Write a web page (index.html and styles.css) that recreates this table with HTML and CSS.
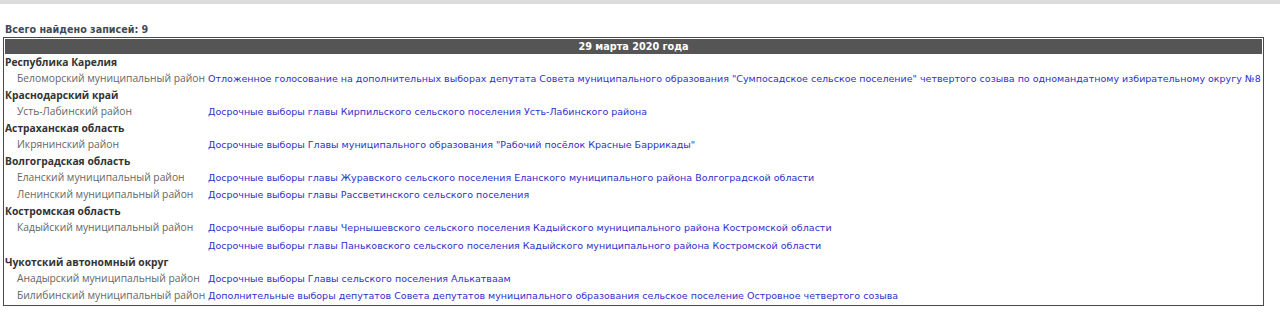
FILE: index.html
```html
<!DOCTYPE html>
<html lang="ru">
<head>
<meta charset="utf-8">
<title>Выборы</title>
<link rel="stylesheet" href="styles.css">
</head>
<body>
<div class="topbar"></div>
<div class="summary">Всего найдено записей: 9</div>
<table class="results">
  <colgroup><col class="c-area"><col class="c-link"></colgroup>
  <thead>
    <tr><th colspan="2" class="date">29 марта 2020 года</th></tr>
  </thead>
  <tbody>
    <tr class="region"><td colspan="2">Республика Карелия</td></tr>
    <tr class="district"><td class="area">Беломорский муниципальный район</td><td><a href="#">Отложенное голосование на дополнительных выборах депутата Совета муниципального образования "Сумпосадское сельское поселение" четвертого созыва по одномандатному избирательному округу №8</a></td></tr>
    <tr class="region"><td colspan="2">Краснодарский край</td></tr>
    <tr class="district"><td class="area">Усть-Лабинский район</td><td><a href="#">Досрочные выборы главы Кирпильского сельского поселения Усть-Лабинского района</a></td></tr>
    <tr class="region"><td colspan="2">Астраханская область</td></tr>
    <tr class="district"><td class="area">Икрянинский район</td><td><a href="#">Досрочные выборы Главы муниципального образования "Рабочий посёлок Красные Баррикады"</a></td></tr>
    <tr class="region"><td colspan="2">Волгоградская область</td></tr>
    <tr class="district"><td class="area">Еланский муниципальный район</td><td><a href="#">Досрочные выборы главы Журавского сельского поселения Еланского муниципального района Волгоградской области</a></td></tr>
    <tr class="district"><td class="area">Ленинский муниципальный район</td><td><a href="#">Досрочные выборы главы Рассветинского сельского поселения</a></td></tr>
    <tr class="region"><td colspan="2">Костромская область</td></tr>
    <tr class="district"><td class="area">Кадыйский муниципальный район</td><td><a href="#">Досрочные выборы главы Чернышевского сельского поселения Кадыйского муниципального района Костромской области</a></td></tr>
    <tr class="district"><td class="area"></td><td><a href="#">Досрочные выборы главы Паньковского сельского поселения Кадыйского муниципального района Костромской области</a></td></tr>
    <tr class="region"><td colspan="2">Чукотский автономный округ</td></tr>
    <tr class="district"><td class="area">Анадырский муниципальный район</td><td><a href="#">Досрочные выборы Главы сельского поселения Алькатваам</a></td></tr>
    <tr class="district"><td class="area">Билибинский муниципальный район</td><td><a href="#">Дополнительные выборы депутатов Совета депутатов муниципального образования сельское поселение Островное четвертого созыва</a></td></tr>
  </tbody>
</table>
</body>
</html>
```
FILE: styles.css
```css
html, body {
  margin: 0;
  padding: 0;
  background: #fff;
}
.topbar {
  height: 4px;
  background: #dcdcdc;
}
.summary {
  font-family: "DejaVu Sans", Verdana, sans-serif;
  font-size: 9.6px;
  font-weight: bold;
  color: #3e4a56;
  margin: 20px 0 0 5px;
  line-height: 12px;
}
.results {
  margin: 1px 0 0 3px;
  width: 1261px;
  border: 1px solid #4a4a4a;
  border-collapse: separate;
  border-spacing: 0;
  padding: 1px;
  table-layout: fixed;
  font-size: 10px;
}
.c-area { width: 203px; }
.date {
  background: #555;
  color: #fff;
  font-family: "DejaVu Sans", Verdana, sans-serif;
  font-size: 9.7px;
  font-weight: bold;
  height: 15px;
  padding: 0;
  line-height: 15px;
  text-align: center;
}
.results td {
  padding: 0;
  white-space: nowrap;
  vertical-align: middle;
  overflow: hidden;
}
.region td {
  font-family: "Open Sans", "Noto Sans", sans-serif;
  font-size: 10.3px;
  font-weight: bold;
  color: #333;
  height: 16px;
  line-height: 16px;
}
.district td {
  height: 17.1px;
  line-height: 17.1px;
  font-family: "DejaVu Sans", Tahoma, sans-serif;
  font-size: 9.5px;
}
.district .area {
  font-family: "Open Sans", "Noto Sans", sans-serif;
  font-size: 10.3px;
  color: #666;
  padding-left: 12px;
}
.district a {
  display: block;
  color: #3030c8;
  text-decoration: none;
}
```
